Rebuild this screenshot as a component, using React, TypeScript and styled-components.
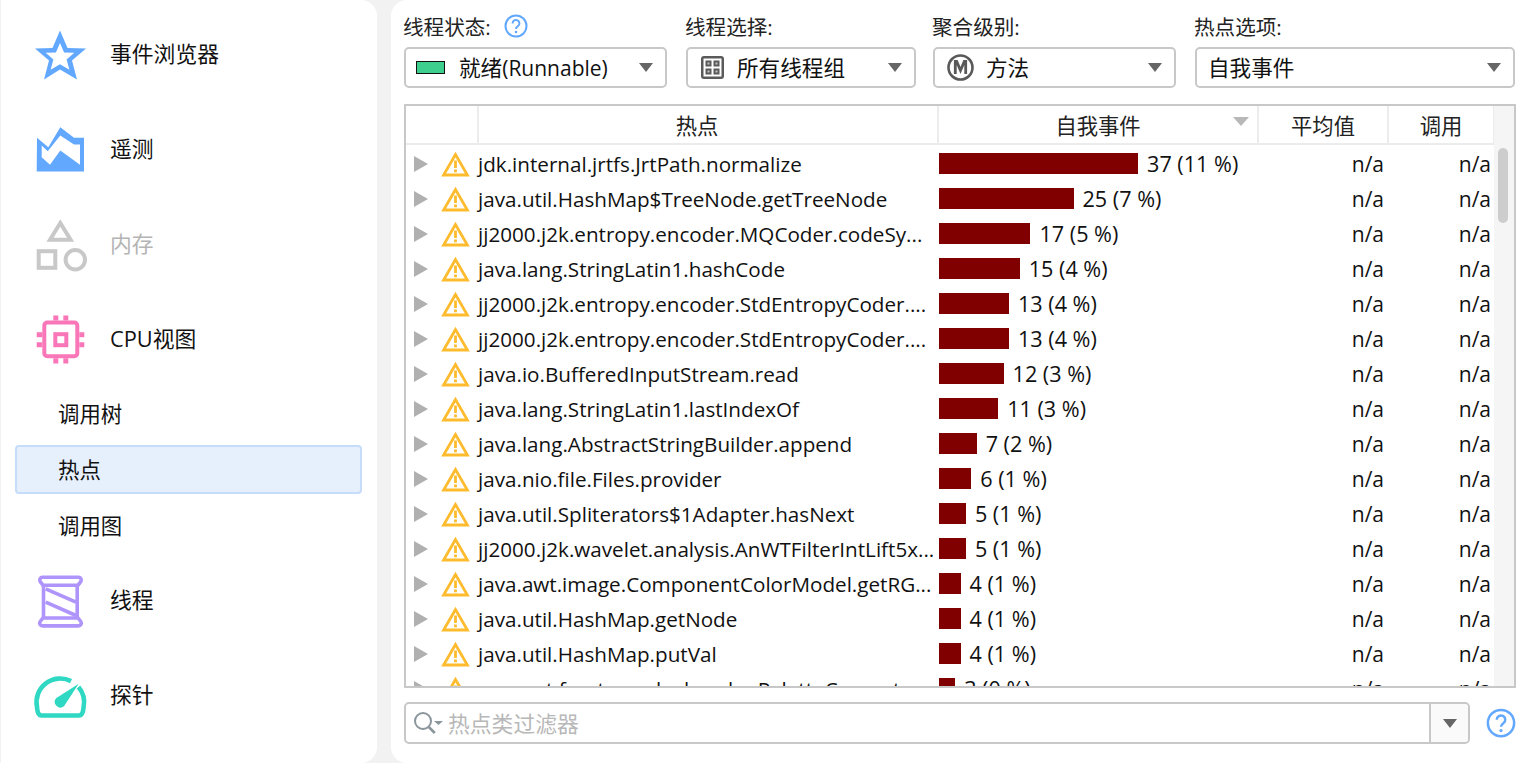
import React from 'react';
import styled, { createGlobalStyle } from 'styled-components';

const GlobalStyle = createGlobalStyle`
  html, body {
    margin: 0;
    height: 100%;
    background: #f2f2f2;
    overflow: hidden;
  }
  * {
    box-sizing: border-box;
  }
  body {
    font-family: "Open Sans", "Noto Sans CJK SC", sans-serif;
    color: #111;
  }
`;

const BAR_UNIT = 5.38;

const hotspots = [
  { name: 'jdk.internal.jrtfs.JrtPath.normalize', count: 37, pct: 11 },
  { name: 'java.util.HashMap$TreeNode.getTreeNode', count: 25, pct: 7 },
  { name: 'jj2000.j2k.entropy.encoder.MQCoder.codeSy...', count: 17, pct: 5 },
  { name: 'java.lang.StringLatin1.hashCode', count: 15, pct: 4 },
  { name: 'jj2000.j2k.entropy.encoder.StdEntropyCoder....', count: 13, pct: 4 },
  { name: 'jj2000.j2k.entropy.encoder.StdEntropyCoder....', count: 13, pct: 4 },
  { name: 'java.io.BufferedInputStream.read', count: 12, pct: 3 },
  { name: 'java.lang.StringLatin1.lastIndexOf', count: 11, pct: 3 },
  { name: 'java.lang.AbstractStringBuilder.append', count: 7, pct: 2 },
  { name: 'java.nio.file.Files.provider', count: 6, pct: 1 },
  { name: 'java.util.Spliterators$1Adapter.hasNext', count: 5, pct: 1 },
  { name: 'jj2000.j2k.wavelet.analysis.AnWTFilterIntLift5x...', count: 5, pct: 1 },
  { name: 'java.awt.image.ComponentColorModel.getRG...', count: 4, pct: 1 },
  { name: 'java.util.HashMap.getNode', count: 4, pct: 1 },
  { name: 'java.util.HashMap.putVal', count: 4, pct: 1 },
  { name: 'sun.awt.freetype.glyphcache.PaletteConverter', count: 3, pct: 0 },
];

/* ------------------------------- Sidebar ------------------------------- */

const Page = styled.div`
  display: flex;
  gap: 14px;
  height: 763px;
  padding-left: 1px;
`;

const Sidebar = styled.nav`
  width: 376px;
  flex: none;
  background: #fff;
  border-radius: 0 16px 16px 0;
  padding: 7px 15px 0 14px;
`;

const NavItem = styled.div<{ $disabled?: boolean }>`
  height: 95px;
  display: flex;
  align-items: center;
  font-size: 21.8px;
  color: ${(p) => (p.$disabled ? '#b4b4b4' : '#111')};
`;

const NavIcon = styled.svg`
  width: 60px;
  height: 60px;
  margin-left: 15px;
  margin-right: 20px;
  flex: none;
`;

const NavLabel = styled.span`
  padding-bottom: 4px;
`;

const SubGroup = styled.div`
  margin-top: -2px;
`;

const SubItem = styled.div`
  height: 56px;
  display: flex;
  align-items: center;
`;

const SubLabel = styled.div<{ $active?: boolean }>`
  width: 347px;
  height: 49px;
  display: flex;
  align-items: center;
  padding: 0 0 2px 41px;
  background: ${(p) => (p.$active ? '#e6f0fd' : 'transparent')};
  border: 2px solid ${(p) => (p.$active ? '#c5dcfb' : 'transparent')};
  border-radius: 4px;
  font-size: 21.4px;
`;

/* -------------------------------- Main --------------------------------- */

const Main = styled.main`
  flex: 1;
  background: #fff;
  border-radius: 16px 0 0 16px;
  padding: 0 10px 0 13px;
  display: flex;
  flex-direction: column;
`;

const Filters = styled.div`
  display: grid;
  grid-template-columns: 282px 247px 262px 320px;
  padding-top: 14px;
`;

const Field = styled.div<{ $gap?: number }>`
  display: flex;
  flex-direction: column;
  padding-right: ${(p) => p.$gap ?? 0}px;
`;

const FieldLabel = styled.div`
  height: 33px;
  padding-bottom: 10px;
  margin-left: -1px;
  display: flex;
  align-items: center;
  gap: 13px;
  font-size: 20.6px;
  color: #222;
`;

const Select = styled.div<{ $inset: number }>`
  height: 41px;
  border: 2px solid #c8c8c8;
  border-radius: 5px;
  display: flex;
  align-items: center;
  padding: 0 12px 0 ${(p) => p.$inset}px;
  gap: 10px;
`;

const SelectText = styled.span`
  flex: 1;
  padding-bottom: 3px;
  white-space: nowrap;
  font-size: 21.6px;
`;

const LatinText = styled.span`
  font-size: 21px;
`;

const Caret = styled.span`
  width: 0;
  height: 0;
  border-left: 7.5px solid transparent;
  border-right: 7.5px solid transparent;
  border-top: 9px solid #666;
  flex: none;
`;

const StateSwatch = styled.span`
  width: 29px;
  height: 13px;
  background: #3ecf8e;
  border: 1px solid #111;
  flex: none;
  margin-right: 4px;
`;

const Table = styled.div`
  margin-top: 16px;
  width: 1112px;
  height: 584px;
  border: 2px solid #c8c8c8;
  overflow: hidden;
  position: relative;
`;

const columns = '75px 460px 320px 130px 106px 20px';

const HeaderRow = styled.div`
  display: grid;
  grid-template-columns: ${columns};
  height: 39px;
  border-bottom: 2px solid #ececec;
  margin-left: -2px;
`;

const HeaderCell = styled.div<{ $shift?: number }>`
  position: relative;
  display: flex;
  align-items: center;
  justify-content: center;
  padding-right: ${(p) => p.$shift ?? 0}px;
  font-size: 21.3px;
  color: #222;
  border-right: 2px solid #ececec;
`;

const HeaderText = styled.span`
  padding-bottom: 1px;
`;

const SortMark = styled.span`
  position: absolute;
  right: 8px;
  top: 11px;
  width: 0;
  height: 0;
  border-left: 8px solid transparent;
  border-right: 8px solid transparent;
  border-top: 9px solid #b8b8b8;
`;

const Body = styled.div`
  padding-top: 1px;
`;

const Row = styled.div`
  display: grid;
  grid-template-columns: ${columns};
  height: 35px;
  margin-left: -2px;
  font-size: 21px;
  align-items: center;
`;

const Disclosure = styled.div`
  display: flex;
  align-items: center;
  padding-left: 10px;
  gap: 13px;
`;

const Arrow = styled.span`
  width: 0;
  height: 0;
  border-top: 8px solid transparent;
  border-bottom: 8px solid transparent;
  border-left: 14px solid #b0b0b0;
  flex: none;
`;

const MethodName = styled.div`
  margin-left: -1px;
  white-space: nowrap;
  font-size: 20.65px;
`;

const EventCell = styled.div`
  display: flex;
  align-items: center;
  gap: 9px;
  white-space: nowrap;
  font-size: 21.6px;
`;

const Bar = styled.div`
  height: 21px;
  background: #800000;
  flex: none;
`;

const NumberCell = styled.div<{ $pad: number }>`
  text-align: right;
  padding-right: ${(p) => p.$pad}px;
`;

const ScrollTrack = styled.div`
  position: absolute;
  top: 0;
  right: 0;
  width: 20px;
  height: 100%;
  background: #f5f5f5;
`;

const ScrollThumb = styled.div`
  position: absolute;
  top: 42px;
  left: 4px;
  width: 10px;
  height: 75px;
  border-radius: 5px;
  background: #cdcdcd;
`;

const FilterRow = styled.div`
  margin-top: 14px;
  display: flex;
  align-items: center;
`;

const FilterBox = styled.div`
  width: 1066px;
  height: 42px;
  border: 2px solid #c8c8c8;
  border-radius: 5px;
  display: flex;
  align-items: center;
`;

const FilterInput = styled.div`
  flex: 1;
  display: flex;
  align-items: center;
  gap: 5px;
  padding-left: 7px;
  padding-bottom: 1px;
  color: #b8b8b8;
  font-size: 21.8px;
`;

const FilterDrop = styled.div`
  width: 39px;
  height: 100%;
  border-left: 2px solid #c8c8c8;
  background: #fafafa;
  display: flex;
  align-items: center;
  justify-content: center;
  border-radius: 0 4px 4px 0;
`;

const HelpSlot = styled.div`
  margin-left: 16px;
  display: flex;
`;

/* -------------------------------- Icons -------------------------------- */

const HelpIcon = ({ size }: { size: number }) => (
  <svg width={size} height={size} viewBox="0 0 24 24" fill="none">
    <circle cx="12" cy="12" r="10.5" stroke="#62a8ff" strokeWidth="2" />
    <path d="M8.6 9.4a3.4 3.4 0 1 1 5.3 2.8c-1.2.8-1.9 1.4-1.9 2.8" stroke="#62a8ff" strokeWidth="2" />
    <circle cx="12" cy="18" r="1.3" fill="#62a8ff" />
  </svg>
);

const WarnIcon = () => (
  <svg width="29" height="26" viewBox="0 0 29 26" fill="none" style={{ flex: 'none' }}>
    <path d="M14.5 3.500 2.600 24h23.800z" stroke="#fdbb2d" strokeWidth="2.8" />
    <path d="M14.500 9.500v7.500" stroke="#fdbb2d" strokeWidth="2.800" />
    <rect x="13.100" y="18.500" width="2.800" height="2.800" fill="#fdbb2d" />
  </svg>
);

const GroupIcon = () => (
  <svg width="23" height="23" viewBox="0 0 23 23" style={{ flex: 'none', marginRight: 3 }}>
    <rect width="23" height="23" rx="3" fill="#5a5a5a" />
    <rect x="2.500" y="2.500" width="18" height="18" fill="#fff" />
    <rect x="4.500" y="4.500" width="6" height="6" fill="#5a5a5a" />
    <rect x="12.500" y="4.500" width="6" height="6" fill="#5a5a5a" />
    <rect x="4.500" y="12.500" width="6" height="6" fill="#5a5a5a" />
    <rect x="12.500" y="12.500" width="6" height="6" fill="#5a5a5a" />
    <path d="M6.500 6.500h2v2h-2zM14.500 6.500h2v2h-2zM6.500 14.500h2v2h-2zM14.500 14.500h2v2h-2z" fill="#c4c4c4" />
  </svg>
);

const MethodIcon = () => (
  <svg width="27" height="27" viewBox="0 0 27 27" fill="none" style={{ flex: 'none', marginRight: 2 }}>
    <circle cx="13.500" cy="13.500" r="12" stroke="#5a5a5a" strokeWidth="2.600" />
    <path d="M8.300 20V7.500h1.400L13.500 16.500l3.800-9h1.400V20" stroke="#5a5a5a" strokeWidth="2.800" />
  </svg>
);

const SearchIcon = () => (
  <svg width="30" height="24" viewBox="0 0 30 24" fill="none" style={{ flex: 'none' }}>
    <circle cx="10" cy="10" r="8" stroke="#8a969c" strokeWidth="2" />
    <path d="m15.800 16 6 6" stroke="#8a969c" strokeWidth="2.600" />
    <path d="m21 10h9l-4.500 4z" fill="#8a969c" />
  </svg>
);

const App = () => (
  <>
    <GlobalStyle />
    <Page>
      <Sidebar>
        <NavItem>
          <NavIcon viewBox="0 0 60 60">
            <path
              d="M30 5.500 37.500 23 56 23.500 42 35.500 47 54.500 30 44.500 14 54.500 19 35.500 5 23.500 22.500 23zM30 18 25.900 27.500 15.700 27.800 23.400 34.400 20.600 44.800 30 39.300 39.400 44.800 36.600 34.400 44.300 27.800 34.100 27.500z"
              fill="#62a8ff"
              fillRule="evenodd"
            />
          </NavIcon>
          <NavLabel>事件浏览器</NavLabel>
        </NavItem>
        <NavItem>
          <NavIcon viewBox="0 0 60 60">
            <path
              d="M7 17.800 18.300 27.200 30.300 7.200 44 17.800H54V51.500H6.700zM11.700 25.500V37.200L20 44.800 30.300 30.500 50 44.800V24.500H44L30.300 15.500 17.700 31.200z"
              fill="#62a8ff"
              fillRule="evenodd"
            />
          </NavIcon>
          <NavLabel>遥测</NavLabel>
        </NavItem>
        <NavItem $disabled>
          <NavIcon viewBox="0 0 60 60" fill="none" stroke="#c8c8c8" strokeWidth="4">
            <path d="M30.300 8 40.600 24.800H20z" />
            <rect x="8.700" y="36.200" width="16.600" height="16.600" />
            <circle cx="45.300" cy="44.800" r="9.700" />
          </NavIcon>
          <NavLabel>内存</NavLabel>
        </NavItem>
        <NavItem>
          <NavIcon viewBox="0 0 60 60" fill="none">
            <rect x="14.300" y="12.500" width="33" height="33.700" rx="3" stroke="#f977b8" strokeWidth="4" />
            <rect x="25.300" y="24.200" width="11" height="11" stroke="#f977b8" strokeWidth="4" />
            <path
              d="M23.300 5.500h5v5h-5zM33.300 5.500h5v5h-5zM23.300 48.200h5v5.300h-5zM33.300 48.200h5v5.300h-5zM6.700 22.200h5.600v5H6.700zM6.700 32.200h5.600v5H6.700zM49.300 22.200h5v5h-5zM49.300 32.200h5v5h-5z"
              fill="#f977b8"
            />
          </NavIcon>
          <NavLabel>CPU视图</NavLabel>
        </NavItem>
        <SubGroup>
          <SubItem>
            <SubLabel>调用树</SubLabel>
          </SubItem>
          <SubItem>
            <SubLabel $active>热点</SubLabel>
          </SubItem>
          <SubItem>
            <SubLabel>调用图</SubLabel>
          </SubItem>
        </SubGroup>
        <NavItem>
          <NavIcon viewBox="0 0 60 60" fill="none" stroke="#ae94fb" strokeWidth="3.600">
            <path d="M12.500 6.300h36a2.800 2.800 0 0 1 2.300 4.400L48 14.200H13L10.200 10.700a2.800 2.800 0 0 1 2.300-4.400zM13 47h35l2.800 3.500a2.800 2.800 0 0 1-2.300 4.400h-36a2.800 2.800 0 0 1-2.300-4.400z" />
            <path d="M13.500 14.200V47M47.200 14.200V47" />
            <path d="M15.700 17.800 46 31.200M15.700 31.200 46 44.500" />
          </NavIcon>
          <NavLabel>线程</NavLabel>
        </NavItem>
        <NavItem>
          <NavIcon viewBox="0 0 60 60" fill="none">
            <path
              d="M48.500 21A23.700 23.700 0 0 1 53.600 41Q53 49.500 49 49.500H11.500Q7.500 49.500 7 41A23.700 23.700 0 0 1 41 15.100"
              stroke="#2fd8c2"
              strokeWidth="4.600"
            />
            <path d="M48.700 17.800 34 40.200A5.700 5.700 0 0 1 26 32.200z" fill="#2fd8c2" />
          </NavIcon>
          <NavLabel>探针</NavLabel>
        </NavItem>
      </Sidebar>

      <Main>
        <Filters>
          <Field $gap={19}>
            <FieldLabel>
              线程状态:
              <HelpIcon size={24} />
            </FieldLabel>
            <Select $inset={10}>
              <StateSwatch />
              <SelectText>
                就绪<LatinText>(Runnable)</LatinText>
              </SelectText>
              <Caret />
            </Select>
          </Field>
          <Field $gap={17}>
            <FieldLabel>线程选择:</FieldLabel>
            <Select $inset={13}>
              <GroupIcon />
              <SelectText>所有线程组</SelectText>
              <Caret />
            </Select>
          </Field>
          <Field $gap={19}>
            <FieldLabel>聚合级别:</FieldLabel>
            <Select $inset={12}>
              <MethodIcon />
              <SelectText>方法</SelectText>
              <Caret />
            </Select>
          </Field>
          <Field>
            <FieldLabel>热点选项:</FieldLabel>
            <Select $inset={11}>
              <SelectText>自我事件</SelectText>
              <Caret />
            </Select>
          </Field>
        </Filters>

        <Table>
          <HeaderRow>
            <HeaderCell />
            <HeaderCell $shift={22}>
              <HeaderText>热点</HeaderText>
            </HeaderCell>
            <HeaderCell>
              <HeaderText>自我事件</HeaderText>
              <SortMark />
            </HeaderCell>
            <HeaderCell>
              <HeaderText>平均值</HeaderText>
            </HeaderCell>
            <HeaderCell>
              <HeaderText>调用</HeaderText>
            </HeaderCell>
          </HeaderRow>
          <Body>
            {hotspots.map((h, i) => (
              <Row key={i}>
                <Disclosure>
                  <Arrow />
                  <WarnIcon />
                </Disclosure>
                <MethodName>{h.name}</MethodName>
                <EventCell>
                  <Bar style={{ width: h.count * BAR_UNIT }} />
                  {h.count} ({h.pct} %)
                </EventCell>
                <NumberCell $pad={5}>n/a</NumberCell>
                <NumberCell $pad={4}>n/a</NumberCell>
              </Row>
            ))}
          </Body>
          <ScrollTrack>
            <ScrollThumb />
          </ScrollTrack>
        </Table>

        <FilterRow>
          <FilterBox>
            <FilterInput>
              <SearchIcon />
              热点类过滤器
            </FilterInput>
            <FilterDrop>
              <Caret />
            </FilterDrop>
          </FilterBox>
          <HelpSlot>
            <HelpIcon size={30} />
          </HelpSlot>
        </FilterRow>
      </Main>
    </Page>
  </>
);

export default App;
